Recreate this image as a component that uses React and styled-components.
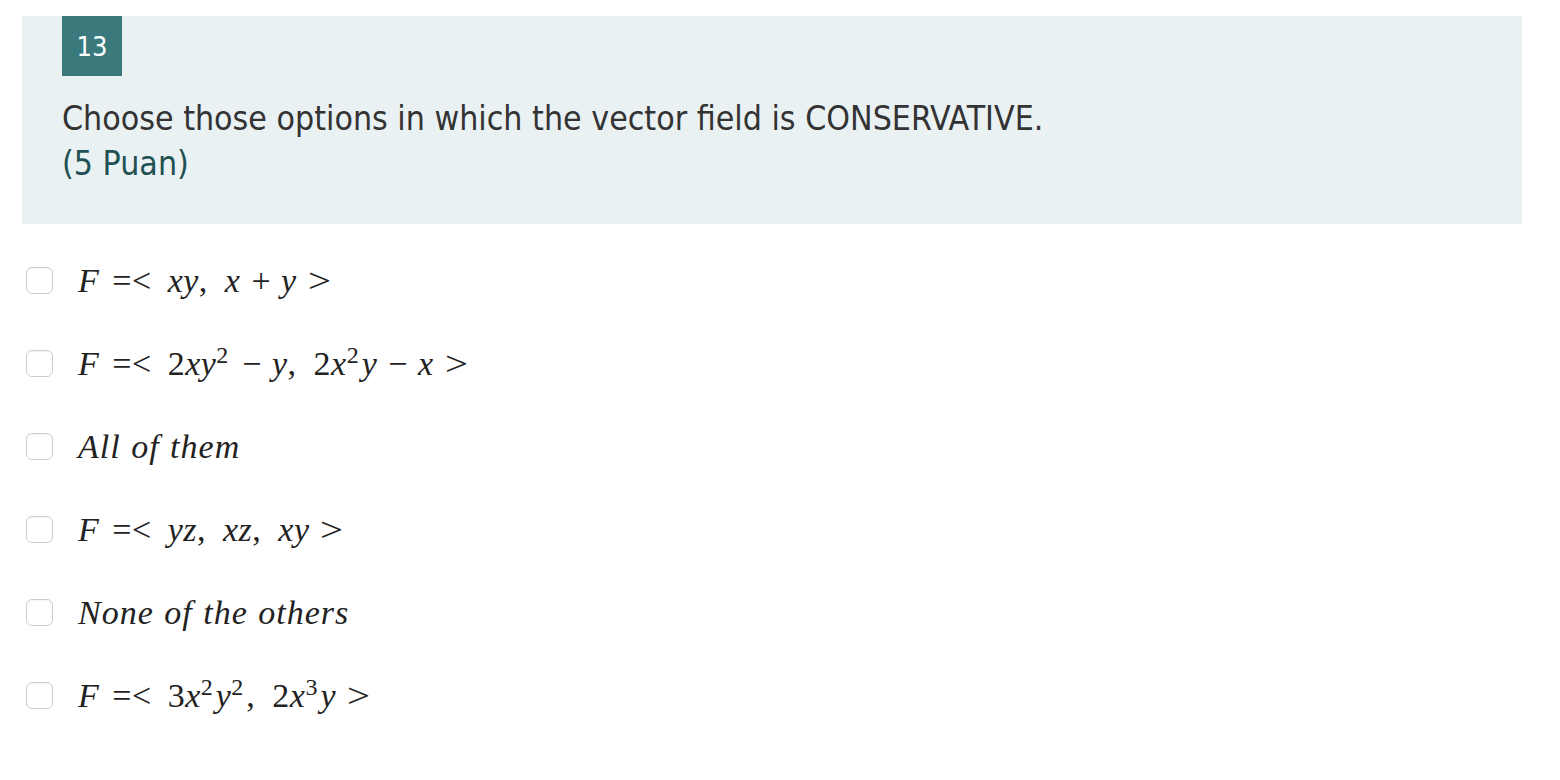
import React from "react";
import styled, { createGlobalStyle } from "styled-components";

const Global = createGlobalStyle`
  html, body { margin: 0; padding: 0; background: #fff; }
  body { font-family: "DejaVu Sans", Verdana, sans-serif; }
`;

const Page = styled.div`
  padding: 16px 38px 0 22px;
`;

const Header = styled.section`
  background: #eaf1f3;
  padding: 0 40px 0 40px;
  height: 208px;
  box-sizing: border-box;
`;

const Badge = styled.div`
  width: 60px;
  height: 60px;
  background: #3a7a7c;
  color: #fff;
  display: flex;
  align-items: center;
  justify-content: center;
  font-family: "DejaVu Sans Condensed", "DejaVu Sans", sans-serif;
  font-size: 27px;
`;

const Title = styled.div`
  margin-top: 20px;
  font-family: "DejaVu Sans Condensed", "DejaVu Sans", sans-serif;
  font-size: 33.6px;
  line-height: 45px;
  color: #333;
`;

const Points = styled.div`
  color: #1f5052;
`;

const List = styled.ul`
  list-style: none;
  margin: 15px 0 0 0;
  padding: 0;
  display: flex;
  flex-direction: column;
`;

const Row = styled.li`
  display: flex;
  align-items: center;
  height: 83px;
  padding-left: 4px;
`;

const Box = styled.span`
  width: 27px;
  height: 27px;
  box-sizing: border-box;
  border: 1px solid #cdcdcd;
  border-radius: 6px;
  background: #fff;
  box-shadow: inset 0 1px 1px rgba(0, 0, 0, 0.04);
  flex: none;
`;

const Math = styled.span`
  margin-left: 25px;
  font-family: "Liberation Serif", "Times New Roman", serif;
  font-style: italic;
  font-size: 34px;
  color: #222;
  white-space: pre;
  letter-spacing: ${(p) => (p.$text ? "1px" : "0.5px")};
  word-spacing: ${(p) => (p.$text ? "1px" : "0")};
`;

const Num = styled.span`
  font-style: normal;
`;

const Rel = styled.span`
  font-style: normal;
  margin: 0 16px 0 13px;
`;

const Close = styled.span`
  font-style: normal;
  margin-left: 11px;
  display: inline-block;
  transform: scaleX(1.2);
  transform-origin: left center;
`;

const Bin = styled.span`
  font-style: normal;
  margin: 0 10px 0 11px;
`;

const Comma = styled.span`
  font-style: normal;
  margin-right: 17px;
`;

const Sup = styled.sup`
  font-family: "Liberation Serif", "Times New Roman", serif;
  font-size: 24px;
  font-style: normal;
  letter-spacing: 0;
  vertical-align: 12px;
  line-height: 0;
  margin: 0 3px 0 0;
`;

const options = [
  { m: <>F<Rel>=&lt;</Rel>xy<Comma>,</Comma>x<Bin>+</Bin>y<Close>&gt;</Close></> },
  {
    m: (
      <>
        F<Rel>=&lt;</Rel><Num>2</Num>xy<Sup>2</Sup><Bin>−</Bin>y<Comma>,</Comma>
        <Num>2</Num>x<Sup>2</Sup>y<Bin>−</Bin>x<Close>&gt;</Close>
      </>
    ),
  },
  { m: "All of them", text: true },
  { m: <>F<Rel>=&lt;</Rel>yz<Comma>,</Comma>xz<Comma>,</Comma>xy<Close>&gt;</Close></> },
  { m: "None of the others", text: true },
  {
    m: (
      <>
        F<Rel>=&lt;</Rel><Num>3</Num>x<Sup>2</Sup>y<Sup>2</Sup><Comma>,</Comma>
        <Num>2</Num>x<Sup>3</Sup>y<Close>&gt;</Close>
      </>
    ),
  },
];

export default function App() {
  return (
    <Page>
      <Global />
      <Header>
        <Badge>13</Badge>
        <Title>
          Choose those options in which the vector field is CONSERVATIVE.
          <Points>(5 Puan)</Points>
        </Title>
      </Header>
      <List>
        {options.map((o, i) => (
          <Row key={i}>
            <Box />
            <Math $text={o.text}>{o.m}</Math>
          </Row>
        ))}
      </List>
    </Page>
  );
}
